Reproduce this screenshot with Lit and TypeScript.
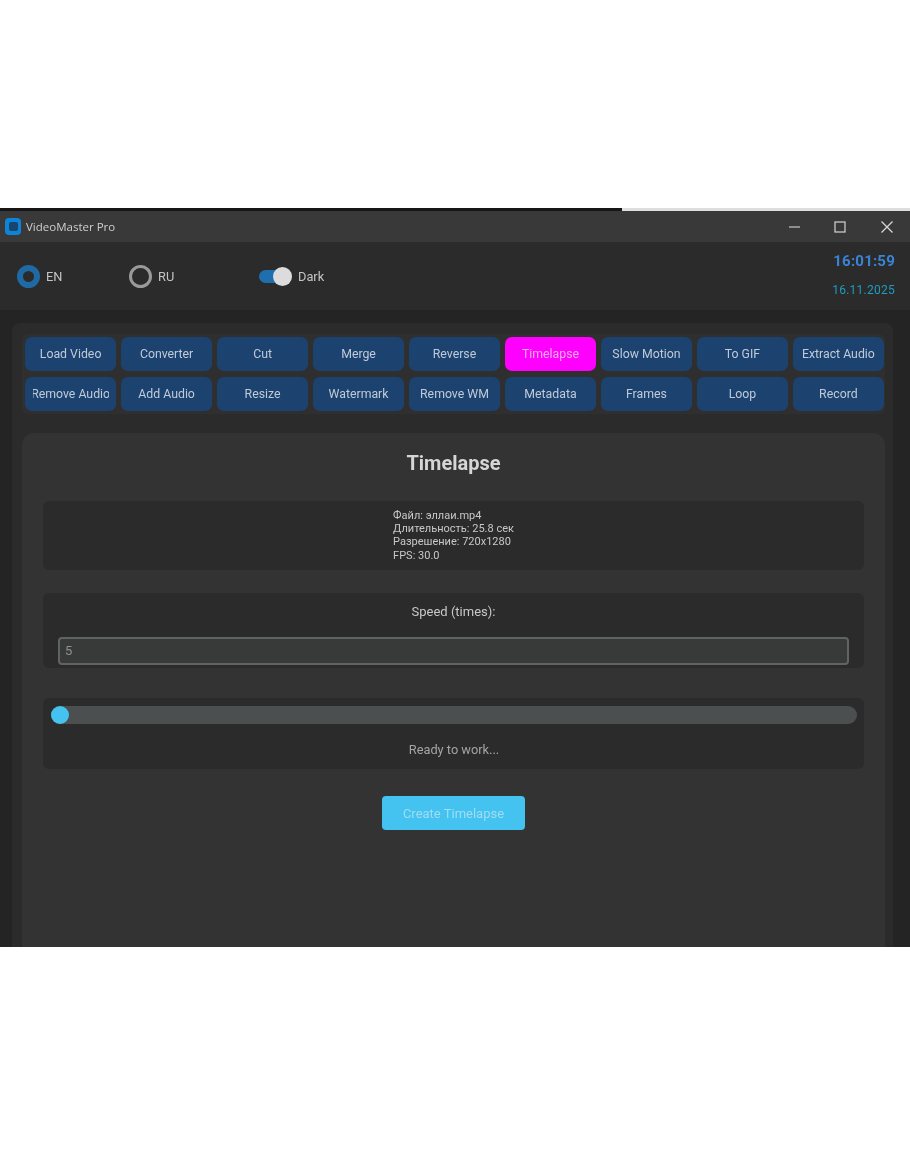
import { LitElement, css, html } from "lit";
import { customElement } from "lit/decorators.js";

const TOOLS = [
  "Load Video", "Converter", "Cut", "Merge", "Reverse", "Timelapse", "Slow Motion", "To GIF", "Extract Audio",
  "Remove Audio", "Add Audio", "Resize", "Watermark", "Remove WM", "Metadata", "Frames", "Loop", "Record"
];

const INFO = ["Файл: эллаи.mp4", "Длительность: 25.8 сек", "Разрешение: 720x1280", "FPS: 30.0"];

@customElement("app-root")
export class AppRoot extends LitElement {
  static styles = css`
    :host {
      display: block;
      height: 1155px;
      padding-top: 208px;
      box-sizing: border-box;
      background: #fff;
      font-family: Roboto, "Liberation Sans", sans-serif;
      color: #d0d0d0;
    }

    /* the reference is a soft, upscaled photo of the app */
    .window {
      height: 739px;
      display: flex;
      flex-direction: column;
      overflow: hidden;
      background: #242424;
      filter: blur(0.6px);
    }

    .strip {
      display: flex;
      height: 3px;
      flex: none;
    }
    .strip .left {
      width: 622px;
      background: #161616;
    }
    .strip .right {
      flex: 1;
      background: #dedede;
    }

    .titlebar {
      flex: none;
      height: 31px;
      display: flex;
      align-items: center;
      padding-left: 5px;
      background: #393939;
      font-family: "Open Sans", "Noto Sans", sans-serif;
      font-size: 11.5px;
      color: #cfcfcf;
    }
    .titlebar .logo {
      width: 16px;
      height: 17px;
      margin-right: 5px;
    }
    .titlebar .name {
      flex: 1;
    }
    .controls {
      display: flex;
    }
    .controls svg {
      display: block;
      width: 46px;
      height: 31px;
    }

    .header {
      flex: none;
      height: 68px;
      display: flex;
      align-items: center;
      padding: 0 15px 0 17px;
      background: #2b2b2b;
      font-size: 12.8px;
      color: #c4c4c4;
    }
    .option {
      display: flex;
      align-items: center;
      gap: 6px;
    }
    .option.en {
      width: 112px;
    }
    .option.ru {
      width: 130px;
    }
    .radio {
      box-sizing: border-box;
      width: 23px;
      height: 23px;
      border-radius: 50%;
      border: 3px solid #9a9a9a;
    }
    .radio.on {
      border: 6.5px solid #1f6aa5;
      background: #2b2b2b;
    }
    .switch {
      position: relative;
      width: 33px;
      height: 13px;
      border-radius: 7px;
      background: #1f6fb0;
    }
    .switch::after {
      content: "";
      position: absolute;
      top: -3px;
      right: 0;
      width: 19px;
      height: 19px;
      border-radius: 50%;
      background: #dcdcdc;
    }
    .clock {
      margin-left: auto;
      margin-top: -4px;
      display: flex;
      flex-direction: column;
      align-items: flex-end;
      gap: 13px;
    }
    .clock .time {
      font-size: 15px;
      font-weight: 700;
      letter-spacing: 0.2px;
      color: #3a84d6;
    }
    .clock .date {
      font-size: 12px;
      letter-spacing: 0.25px;
      color: #1f9cc0;
    }

    .body {
      flex: 1;
      min-height: 0;
      padding: 13px 17px 0 12px;
    }
    .panel {
      height: 100%;
      box-sizing: border-box;
      padding: 11px 8px 0 10px;
      border-radius: 8px 8px 0 0;
      background: #2b2b2b;
    }

    .tools {
      display: grid;
      grid-template-columns: repeat(9, minmax(0, 1fr));
      grid-auto-rows: 34px;
      gap: 6px 4.75px;
      padding: 3px 1px 3px 3px;
      border-radius: 6px;
      background: #2f2f2f;
    }
    .tool {
      display: flex;
      min-width: 0;
      padding: 0 7.5px 1px;
      border-radius: 7px;
      background: #1c4270;
      font-size: 12.3px;
      color: #c0cbd8;
    }
    .tool.active {
      background: #ff00ff;
      color: #f0b0f0;
    }
    .tool .text {
      flex: 1;
      min-width: 0;
      display: flex;
      align-items: center;
      justify-content: center;
      overflow: hidden;
      white-space: nowrap;
    }

    .card {
      margin-top: 19px;
      height: 521px;
      box-sizing: border-box;
      padding: 0 21px;
      border-radius: 12px 12px 0 0;
      background: #333333;
      display: flex;
      flex-direction: column;
    }
    .card h1 {
      margin: 18px 0 26px;
      height: 24px;
      line-height: 24px;
      text-align: center;
      font-size: 20px;
      font-weight: 700;
      color: #d6d6d6;
    }

    .box {
      border-radius: 6px;
      background: #2b2b2b;
    }
    .info {
      height: 69px;
      box-sizing: border-box;
      display: flex;
      justify-content: center;
      padding-top: 8px;
    }
    .info .lines {
      font-size: 11px;
      line-height: 13.2px;
      color: #c8c8c8;
    }
    .speed {
      margin-top: 23px;
      height: 75px;
      box-sizing: border-box;
      padding: 10px 15px 0;
      text-align: center;
      font-size: 13px;
      color: #c8c8c8;
    }
    .speed .label {
      height: 18px;
      line-height: 18px;
    }
    .field {
      margin-top: 16px;
      height: 28px;
      box-sizing: border-box;
      padding: 0 0 2px 5px;
      display: flex;
      align-items: center;
      border: 2px solid #5f6363;
      border-radius: 4px;
      background: #383a3a;
      font-size: 13px;
      color: #8f8f8f;
    }
    .progress {
      margin-top: 30px;
      height: 71px;
      box-sizing: border-box;
      padding: 8px 7px 0 8px;
    }
    .track {
      position: relative;
      height: 18px;
      border-radius: 9px;
      background: #4b4f50;
    }
    .track::before {
      content: "";
      position: absolute;
      left: 0;
      top: 0;
      width: 18px;
      height: 18px;
      border-radius: 50%;
      background: #45c3f0;
    }
    .status {
      margin-top: 17px;
      text-align: center;
      font-size: 12.8px;
      line-height: 18px;
      color: #a4a4a4;
    }
    .create {
      align-self: center;
      margin-top: 27px;
      width: 143px;
      height: 34px;
      display: flex;
      align-items: center;
      justify-content: center;
      border-radius: 4px;
      background: #45c3f0;
      font-size: 13px;
      color: #9fdcf5;
    }
  `;

  render() {
    return html`<div class="window">
      <div class="strip"><div class="left"></div><div class="right"></div></div>

      <div class="titlebar">
        <svg class="logo" viewBox="0 0 16 17">
          <rect x="0" y="0" width="16" height="17" rx="4" fill="#0d84d8"></rect>
          <rect x="4" y="4" width="9" height="9" rx="2" fill="#17456f"></rect>
        </svg>
        <span class="name">VideoMaster Pro</span>
        <div class="controls">
          <svg viewBox="0 0 46 31"><path d="M17 16H28" stroke="#c8c8c8" stroke-width="1.2"></path></svg>
          <svg viewBox="0 0 46 31"><rect x="17" y="11" width="10" height="10" fill="none" stroke="#d4d4d4" stroke-width="1.2"></rect></svg>
          <svg viewBox="0 0 46 31"><path d="M17.5 10.5L28.5 21.5M28.5 10.5L17.5 21.5" stroke="#d8d8d8" stroke-width="1.3"></path></svg>
        </div>
      </div>

      <div class="header">
        <div class="option en"><div class="radio on"></div>EN</div>
        <div class="option ru"><div class="radio"></div>RU</div>
        <div class="option"><div class="switch"></div>Dark</div>
        <div class="clock">
          <span class="time">16:01:59</span>
          <span class="date">16.11.2025</span>
        </div>
      </div>

      <div class="body">
        <div class="panel">
          <div class="tools">
            ${TOOLS.map(
              tool => html`<div class="tool ${tool === "Timelapse" ? "active" : ""}">
                <span class="text">${tool}</span>
              </div>`
            )}
          </div>

          <div class="card">
            <h1>Timelapse</h1>
            <div class="box info">
              <div class="lines">${INFO.map(line => html`<div>${line}</div>`)}</div>
            </div>
            <div class="box speed">
              <div class="label">Speed (times):</div>
              <div class="field">5</div>
            </div>
            <div class="box progress">
              <div class="track"></div>
              <div class="status">Ready to work...</div>
            </div>
            <div class="create">Create Timelapse</div>
          </div>
        </div>
      </div>
    </div>`;
  }
}
